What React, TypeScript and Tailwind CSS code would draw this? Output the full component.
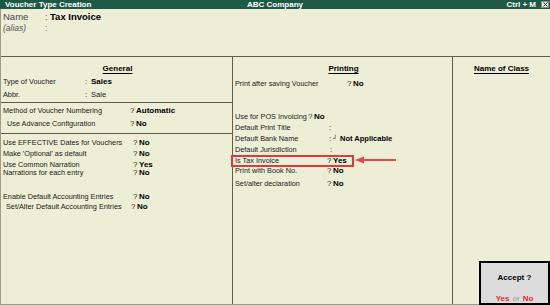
import React from 'react'

type FieldProps = {
  label: string
  w: string
  sep?: string
  value?: React.ReactNode
  bold?: boolean
  mt?: string
  pad?: string
  children?: React.ReactNode
}

function Field({ label, w, sep = '?', value, bold = true, mt = '', pad = '', children }: FieldProps) {
  return (
    <div className={`relative flex h-[8px] items-center whitespace-nowrap leading-none ${mt}`}>
      <span className={`shrink-0 ${w} ${pad}`}>{label}</span>
      <span className="w-[6px] shrink-0 text-[8px]">{sep}</span>
      {value != null && (
        <span className={bold ? 'text-[8px] font-bold text-black' : 'text-[7.6px]'}>{value}</span>
      )}
      {children}
    </div>
  )
}

function Heading({ children }: { children: React.ReactNode }) {
  return (
    <div className="mt-[8px] flex h-[8px] items-center justify-center text-[8px] font-bold leading-none text-black underline underline-offset-[1.5px]">
      {children}
    </div>
  )
}

export default function App() {
  return (
    <div className="relative flex h-[305px] w-[550px] flex-col overflow-hidden bg-[#ecefd5] font-['Liberation_Sans',Arial,sans-serif] text-[7.3px] text-[#1a1a1a]">
      {/* title bar */}
      <div className="grid h-[9px] shrink-0 grid-cols-[1fr_auto_1fr] items-center bg-[#1d5946] text-[8px] font-bold leading-none text-white">
        <span className="pl-[5px]">Voucher Type Creation</span>
        <span>ABC Company</span>
        <div className="flex items-center justify-end gap-[5px] pr-[1px]">
          <span>Ctrl + M</span>
          <span className="flex h-[7px] w-[8px] items-center justify-center border border-[#8c8c8c] bg-[#e6e6e6]">
            <svg width="5" height="5" viewBox="0 0 5 5">
              <path d="M0.5 0.5 L4.5 4.5 M4.5 0.5 L0.5 4.5" stroke="#333" strokeWidth="1" />
            </svg>
          </span>
        </div>
      </div>

      <div className="flex flex-1 flex-col border-b border-l border-[#9c9c8c]">
        {/* name / alias */}
        <div className="h-[48px] shrink-0 border-b border-[#5e5e50] pl-[2px] leading-none">
          <div className="mt-[3px] flex h-[10px] items-center text-[9.5px]">
            <span className="w-[42px] text-[#4a4a4a]">Name</span>
            <span className="w-[5px] text-[#6a6a6a]">:</span>
            <span className="font-bold text-black">Tax Invoice</span>
          </div>
          <div className="mt-[2px] flex h-[9px] items-center text-[8.5px] italic text-[#555]">
            <span className="w-[42px]">(alias)</span>
            <span className="not-italic text-[#777]">:</span>
          </div>
        </div>

        <div className="flex flex-1">
          {/* General */}
          <div className="flex w-[232px] shrink-0 flex-col border-r border-[#5e5e50]">
            <div className="h-[46px] shrink-0 border-b border-[#5e5e50] pl-[2px]">
              <Heading>General</Heading>
              <Field mt="mt-[5px]" w="w-[82px]" label="Type of Voucher" sep=":" value="Sales" />
              <Field mt="mt-[5px]" w="w-[82px]" label="Abbr." sep=":" value="Sale" bold={false} />
            </div>
            <div className="h-[31px] shrink-0 border-b border-[#5e5e50] pl-[2px]">
              <Field mt="mt-[4px]" w="w-[127px]" label="Method of Voucher Numbering" value="Automatic" />
              <Field mt="mt-[5px]" w="w-[127px]" pad="pl-[4px]" label="Use Advance Configuration" value="No" />
            </div>
            <div className="flex-1 pl-[2px]">
              <Field mt="mt-[5px]" w="w-[130px]" label="Use EFFECTIVE Dates for Vouchers" value="No" />
              <Field mt="mt-[3px]" w="w-[130px]" label="Make 'Optional' as default" value="No" />
              <Field mt="mt-[3px]" w="w-[130px]" label="Use Common Narration" value="Yes" />
              <Field w="w-[130px]" label="Narrations for each entry" value="No" />
              <Field mt="mt-[16px]" w="w-[130px]" label="Enable Default Accounting Entries" value="No" />
              <Field mt="mt-[2px]" w="w-[128px]" pad="pl-[3px]" label="Set/Alter Default Accounting Entries" value="No" />
            </div>
          </div>

          {/* Printing */}
          <div className="w-[220px] shrink-0 border-r border-[#5e5e50] pl-[2px]">
            <Heading>Printing</Heading>
            <Field mt="mt-[7px]" w="w-[112px]" label="Print after saving Voucher" value="No" />
            <Field mt="mt-[25px]" w="w-[73px]" label="Use for POS Invoicing" value="No" />
            <Field mt="mt-[3px]" w="w-[94px]" label="Default Print Title" sep=":" />
            <div className="mt-[3px] flex h-[8px] items-center whitespace-nowrap leading-none">
              <span className="w-[94px] shrink-0">Default Bank Name</span>
              <span className="w-[4px] shrink-0 text-[8px]">:</span>
              <span className="w-[7px] shrink-0 -translate-y-[1.5px] text-[6px] font-bold text-black">┘</span>
              <span className="text-[7.5px] font-bold text-black">Not Applicable</span>
            </div>
            <Field mt="mt-[3px]" w="w-[95px]" label="Default Jurisdiction" sep=":" />
            <Field mt="mt-[3px]" w="w-[92px]" label="Is Tax Invoice" value="Yes">
              <div className="absolute -top-[2px] -left-[4px] h-[12px] w-[123px] border-2 border-[#e4393c]" />
              <svg className="absolute -top-[2px] left-[120px]" width="42" height="10" viewBox="0 0 42 10">
                <polygon points="0,5 9,1.5 9,8.5" fill="#e5484b" />
                <line x1="8" y1="5" x2="41" y2="5" stroke="#e5484b" strokeWidth="2" />
              </svg>
            </Field>
            <Field mt="mt-[2px]" w="w-[92px]" label="Print with Book No." value="No" />
            <Field mt="mt-[5px]" w="w-[92px]" label="Set/alter declaration" value="No" />
          </div>

          {/* Name of Class */}
          <div className="flex-1">
            <Heading>Name of Class</Heading>
          </div>
        </div>
      </div>

      {/* Accept prompt */}
      <div className="absolute top-[261px] left-[479px] flex h-[44px] w-[71px] flex-col items-center border-2 border-black bg-[#dcdcdc] leading-none">
        <div className="mt-[11px] flex h-[8px] items-center text-[8px] font-bold text-black">Accept ?</div>
        <div className="mt-[13px] flex h-[8px] items-center gap-[3px] text-[8px]">
          <span className="font-bold text-[#e8262b]">Yes</span>
          <span className="text-[#9a9a9a]">or</span>
          <span className="font-bold text-[#e8262b]">No</span>
        </div>
      </div>
    </div>
  )
}
